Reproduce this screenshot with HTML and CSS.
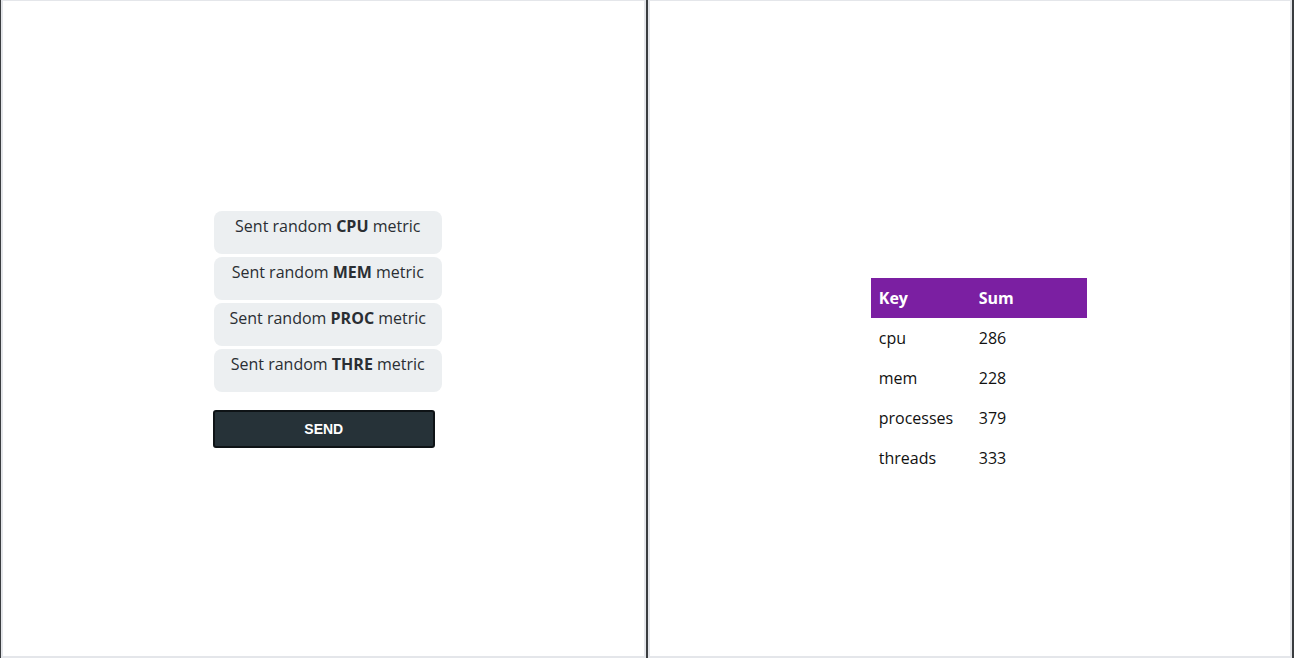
FILE: index.html
```html
<!DOCTYPE html>
<html>
<head>
<meta charset="utf-8">
<link rel="stylesheet" href="styles.css">
</head>
<body>
<div class="frames">
  <section class="pane pane-left">
    <div class="sender">
      <div class="msg">Sent random <b>CPU</b> metric</div>
      <div class="msg">Sent random <b>MEM</b> metric</div>
      <div class="msg">Sent random <b>PROC</b> metric</div>
      <div class="msg">Sent random <b>THRE</b> metric</div>
      <button class="send">SEND</button>
    </div>
  </section>
  <section class="pane pane-right">
    <div class="table-wrap">
      <table class="sums">
        <thead>
          <tr><th class="c1">Key</th><th class="c2">Sum</th></tr>
        </thead>
        <tbody>
          <tr><td>cpu</td><td>286</td></tr>
          <tr><td>mem</td><td>228</td></tr>
          <tr><td>processes</td><td>379</td></tr>
          <tr><td>threads</td><td>333</td></tr>
        </tbody>
      </table>
    </div>
  </section>
</div>
</body>
</html>
```
FILE: styles.css
```css
html, body {
  margin: 0;
  padding: 0;
  height: 100%;
}
body {
  background: #3a3d40;
  font-family: "Open Sans", "Liberation Sans", sans-serif;
}
.frames {
  display: flex;
  height: 658px;
  padding: 0 2px 0 1px;
  gap: 2px;
  box-sizing: border-box;
}
.pane {
  flex: 1;
  background: #ffffff;
  border: 2px solid #e4e6ea;
  border-top-width: 1px;
  box-sizing: border-box;
  display: flex;
  align-items: center;
  justify-content: center;
}
.sender {
  display: flex;
  flex-direction: column;
  align-items: flex-start;
  width: 229px;
  padding-left: 8px;
  padding-top: 2px;
}
.msg {
  box-sizing: border-box;
  width: 228px;
  height: 43px;
  margin-left: 1px;
  margin-bottom: 3px;
  padding-top: 4px;
  background: #eceff1;
  border-radius: 8px;
  color: #2a2e33;
  font-size: 16px;
  line-height: 22px;
  text-align: center;
}
.msg b {
  font-weight: 700;
}
.send {
  margin-top: 15px;
  width: 222px;
  height: 38px;
  background: #263238;
  border: 2px solid #0e1316;
  border-radius: 3px;
  color: #ffffff;
  font-family: "Liberation Sans", Arial, sans-serif;
  font-weight: 700;
  font-size: 14px;
  padding: 0;
}
.table-wrap {
  padding-top: 98px;
  padding-left: 18px;
}
.sums {
  border-collapse: collapse;
  width: 216px;
  font-size: 16px;
  color: #111111;
}
.sums th {
  background: #7b1fa2;
  color: #ffffff;
  font-weight: 700;
  text-align: left;
  height: 40px;
  padding: 0 8px;
}
.sums th.c1 {
  width: 84px;
}
.sums td {
  height: 40px;
  padding: 0 8px;
}
```
